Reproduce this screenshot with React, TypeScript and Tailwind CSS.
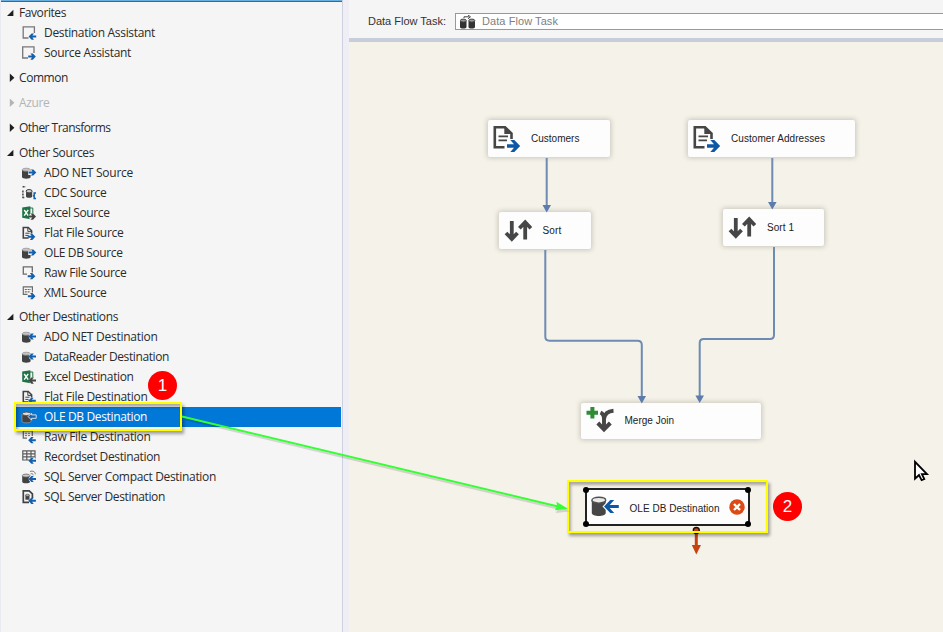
import { useLayoutEffect, useRef, useState, type ReactNode } from "react";

/** Single-line text whose letter spacing is fitted to a given width. */
function FitText({ text, width, className = "" }: { text: string; width: number; className?: string }) {
  const ref = useRef<HTMLSpanElement>(null);
  const [spacing, setSpacing] = useState(0);
  useLayoutEffect(() => {
    const el = ref.current;
    if (!el) return;
    const natural = el.getBoundingClientRect().width - spacing * text.length;
    setSpacing((width - natural) / text.length);
  }, [text, width]);
  return (
    <span ref={ref} className={`whitespace-nowrap ${className}`} style={{ letterSpacing: spacing }}>
      {text}
    </span>
  );
}

type IconKind =
  | "assistDest" | "assistSrc" | "dbSrc" | "dbDest" | "cdc" | "excelSrc" | "excelDest"
  | "fileSrc" | "fileDest" | "rawSrc" | "rawDest" | "xml" | "grid" | "compact" | "server" | "dbSel";

const DARK = "#424242";
const BLUE = "#1560ac";

/** Small arrow centred on (x, y). */
function Arrow({ x, y, left = false, color = BLUE }: { x: number; y: number; left?: boolean; color?: string }) {
  return (
    <path
      transform={`translate(${x} ${y}) scale(${left ? -1 : 1} 1)`}
      d="M-3.6 -1H.2L-1.4 -3.1H1L4 0L1 3.1H-1.4L.2 1H-3.6Z"
      fill={color}
    />
  );
}

function Cylinder() {
  return (
    <>
      <path d="M0 4V11C0 13.2 8.6 13.2 8.6 11V4Z" fill={DARK} />
      <ellipse cx="4.3" cy="3.7" rx="4" ry="1.5" fill="#c4c4c4" stroke="#8a8a8a" strokeWidth=".7" />
    </>
  );
}

function Doc() {
  return (
    <>
      <path d="M6.5 12H1.3V1.5H6.2L9.6 4.8V7.5" fill="none" stroke={DARK} strokeWidth="1.6" />
      <path d="M5.8 1.5V5.4H9.8M3.3 7.2H7.6M3.3 9.4H6.6" fill="none" stroke={DARK} strokeWidth="1" />
    </>
  );
}

function Excel() {
  return (
    <>
      <path d="M.2 1.6L8.4 .2V13.2L.2 11.8Z" fill="#217346" />
      <path d="M8 2H10.8V8" fill="none" stroke="#217346" strokeWidth="1" />
      <path d="M2.2 4L6.2 9.6M6.2 3.8L2.2 9.6" stroke="white" strokeWidth="1.4" />
    </>
  );
}

function SmallIcon({ kind }: { kind: IconKind }) {
  const body: Record<IconKind, ReactNode> = {
    assistDest: <><path d="M6.5 12H1.2V.8H12.4V7" fill="none" stroke="#777" strokeWidth="1.3" /><Arrow x={10.6} y={10.6} left /></>,
    assistSrc: <><path d="M6 12H.7V.8H12V7" fill="none" stroke="#777" strokeWidth="1.3" /><Arrow x={9.8} y={10.6} /></>,
    dbSrc: <><Cylinder /><path d="M6.2 4.5H9V9H6.2Z" fill="#f5f5f5" /><Arrow x={10.3} y={6.5} /></>,
    dbDest: <><Cylinder /><circle cx="9.8" cy="6.5" r="3" fill="#f5f5f5" /><Arrow x={10.4} y={6.5} left /></>,
    dbSel: <><path d="M0 4V11.2C0 13.4 9 13.4 9 11.2V4Z" fill={DARK} stroke="#aaa" strokeWidth=".6" /><ellipse cx="4.5" cy="3.8" rx="4.2" ry="1.8" fill="#ddd" stroke="#555" /><path d="M6.1 6.6L9.6 3.1V4.9H14.2V8.3H9.6V10.1Z" fill="#1764b2" stroke="#ddd" strokeWidth="1" /></>,
    cdc: <><path d="M.6 .8H3.8M.9 4.5V11.5M.3 11.5H3" fill="none" stroke={DARK} strokeWidth="1.5" strokeDasharray="2 1" /><path d="M4 5.8V10.5C4 12.3 10.2 12.3 10.2 10.5V5.8Z" fill={DARK} /><ellipse cx="7.1" cy="5.2" rx="3" ry="1.7" fill="#ccc" stroke={DARK} strokeWidth="1" /><path d="M14 7H12.2V12.5H14M10.9 9.7H12" fill="none" stroke={BLUE} strokeWidth="1.5" /></>,
    excelSrc: <><Excel /><circle cx="10" cy="10.6" r="3.1" fill="#f5f5f5" /><Arrow x={10} y={10.6} color="#444" /></>,
    excelDest: <><Excel /><circle cx="10.4" cy="10.6" r="3.1" fill="#f5f5f5" /><Arrow x={10.4} y={10.6} left color="#444" /></>,
    fileSrc: <><Doc /><Arrow x={9.3} y={10.8} /></>,
    fileDest: <><Doc /><Arrow x={10.2} y={10.8} left /></>,
    rawSrc: <><path d="M5 8.2H1.3V.9H10.3V6.5" fill="none" stroke="#6b6b6b" strokeWidth="1.3" /><Arrow x={9.3} y={10.2} /></>,
    rawDest: <><path d="M5 8.2H1.3V.9H10.3V6" fill="none" stroke="#6b6b6b" strokeWidth="1.3" /><path d="M3 3.3H9M3 5.6H8" stroke="#777" strokeDasharray="2 1" /><Arrow x={10.2} y={10.2} left /></>,
    xml: <><path d="M5.5 8.4H1.3V.9H10.4V6.5" fill="none" stroke="#6b6b6b" strokeWidth="1.2" /><path d="M2.8 3.5H9M2.8 5.8H8.5" stroke="#666" strokeWidth="1.2" strokeDasharray="2 .8" /><Arrow x={9.5} y={10.2} /></>,
    grid: <><path d="M.8 .8H13V10H.8ZM.8 3.8H13M.8 6.9H13M4.8 .8V10M9 .8V10" fill="none" stroke="#5b5b5b" strokeWidth="1.2" /><circle cx="10.7" cy="10.7" r="3.4" fill="#f5f5f5" /><Arrow x={10.4} y={10.7} left /></>,
    compact: <><path d="M.2 6V11.7C.2 13.7 8 13.7 8 11.7V6Z" fill={DARK} /><ellipse cx="4.1" cy="5.6" rx="3.8" ry="1.5" fill="#ccc" stroke="#666" strokeWidth=".8" /><path d="M8 1.5C11 .3 13.5 2.1 13.3 4.3M8.5 3.9C10 3.3 11.2 3.9 11.3 5.3" fill="none" stroke="#777" /><circle cx="9.5" cy="9" r="2.8" fill="#f5f5f5" /><Arrow x={10.4} y={9} left /></>,
    server: <><path d="M7 12.3H1.3V.9H7.2L10.4 3.9V8" fill="none" stroke={DARK} strokeWidth="1.7" /><path d="M3.4 5.2V9.7H7.5V5.2Z" fill={DARK} /><ellipse cx="5.5" cy="5.2" rx="2.1" ry="1" fill="#bbb" stroke={DARK} strokeWidth=".6" /><Arrow x={10.3} y={10.8} left /></>,
  };
  return (
    <svg width="15" height="14" viewBox="0 0 15 14" className="shrink-0 overflow-visible">
      {body[kind]}
    </svg>
  );
}

type Item = [label: string, width: number, icon: IconKind];
type Group = { title: string; width: number; open?: boolean; disabled?: boolean; items?: Item[] };

const groups: Group[] = [
  { title: "Favorites", width: 47, open: true, items: [["Destination Assistant", 111, "assistDest"], ["Source Assistant", 87, "assistSrc"]] },
  { title: "Common", width: 49 },
  { title: "Azure", width: 30.5, disabled: true },
  { title: "Other Transforms", width: 91.5 },
  {
    title: "Other Sources", width: 75, open: true,
    items: [
      ["ADO NET Source", 89, "dbSrc"],
      ["CDC Source", 62.5, "cdc"],
      ["Excel Source", 65.5, "excelSrc"],
      ["Flat File Source", 79.5, "fileSrc"],
      ["OLE DB Source", 78.5, "dbSrc"],
      ["Raw File Source", 82.5, "rawSrc"],
      ["XML Source", 62.5, "xml"],
    ],
  },
  {
    title: "Other Destinations", width: 99, open: true,
    items: [
      ["ADO NET Destination", 113.5, "dbDest"],
      ["DataReader Destination", 125, "dbDest"],
      ["Excel Destination", 89.5, "excelDest"],
      ["Flat File Destination", 103.5, "fileDest"],
      ["OLE DB Destination", 103, "dbSel"],
      ["Raw File Destination", 106.5, "rawDest"],
      ["Recordset Destination", 116, "grid"],
      ["SQL Server Compact Destination", 172, "compact"],
      ["SQL Server Destination", 121, "server"],
    ],
  },
];

function ToolboxGroup({ group }: { group: Group }) {
  return (
    <section>
      <div className={`flex h-5 items-center pl-[7px] ${group.disabled ? "text-[#b4b4b4]" : "text-[#2b2b2b]"}`}>
        <svg width="12" height="10" viewBox="0 0 12 10" className="shrink-0">
          {group.open ? <path d="M0 8L6.4 1.8V8Z" fill="#1e1e1e" /> : <path d="M2.8 .5L7.4 4.7L2.8 8.9Z" fill={group.disabled ? "#b4b4b4" : "#1e1e1e"} />}
        </svg>
        <FitText text={group.title} width={group.width} />
      </div>
      {group.items?.map(([label, width, icon]) => {
        const selected = label === "OLE DB Destination";
        return (
          <div key={label} className={`ml-4 flex h-5 items-center gap-[7px] pl-[6px] ${selected ? "bg-[#0078d7] text-white" : "text-[#2b2b2b]"}`}>
            <SmallIcon kind={icon} />
            <FitText text={label} width={width} />
          </div>
        );
      })}
    </section>
  );
}

function FileGlyph() {
  return (
    <svg width="29" height="28" viewBox="0 0 29 28">
      <path d="M12.5 22.3H2.8V2.3H13L19.5 8.5V14" fill="none" stroke="#464646" strokeWidth="2.6" />
      <path d="M12.3 1V9H20.5Z" fill="#464646" />
      <path d="M6.5 11.3H16M6.5 15.3H15" stroke="#464646" strokeWidth="1.7" />
      <path d="M15 19.2H22L18.3 15H22.3L28.2 21L22.3 27H18.3L22 22.8H15Z" fill="#0d58a6" />
    </svg>
  );
}

function SortGlyph() {
  return (
    <svg width="28" height="24" viewBox="0 0 28 24">
      <g fill="none" stroke="#464646" strokeWidth="3.8">
        <path d="M7.8 2V19.5M2 14L7.8 20L13.5 14" />
        <path d="M21.2 20.5V4M15.4 9.3L21.2 3.2L26.9 9.3" />
      </g>
    </svg>
  );
}

function MergeGlyph() {
  return (
    <svg width="28" height="28" viewBox="0 0 28 28">
      <path d="M6.4 0V11.5M.5 5.8H12" stroke="#2f8b34" strokeWidth="4" />
      <path d="M14.5 5.5Q18 7 18 12V22M18 12Q19 4.4 27.5 3.8" fill="none" stroke="#464646" strokeWidth="3.9" />
      <path d="M11.8 16L18 22.4L24.3 16" fill="none" stroke="#464646" strokeWidth="4" />
    </svg>
  );
}

function DatabaseGlyph() {
  return (
    <svg width="28" height="22" viewBox="0 0 28 22">
      <path d="M.8 4V17C.8 21 14.7 21 14.7 17V4Z" fill="#464646" />
      <ellipse cx="7.8" cy="4.2" rx="6.9" ry="2.9" fill="#e8e8e8" stroke="#505050" strokeWidth="1.4" />
      <path d="M13 10.5L19.3 4H23.2L18.7 8.9H27.8V12.1H18.7L23.2 17H19.3Z" fill="#0d58a6" stroke="white" strokeWidth="2.2" paintOrder="stroke" />
    </svg>
  );
}

function FlowNode({ place, glyph, label, width }: { place: string; glyph: ReactNode; label: string; width: number }) {
  return (
    <div className={`absolute flex items-center rounded-[2px] bg-[#fdfdfe] shadow-[0_0_5px_1px_rgba(110,105,90,0.32)] ${place}`}>
      {glyph}
      <FitText text={label} width={width} className="text-[10px] leading-3 text-[#222]" />
    </div>
  );
}

function Badge({ place, children }: { place: string; children: ReactNode }) {
  return (
    <div className={`absolute flex size-[29px] items-center justify-center rounded-full bg-[#fe0000] font-['Liberation_Sans',sans-serif] text-[17px] leading-none text-white ${place}`}>
      {children}
    </div>
  );
}

const handles = ["-left-[4px] -top-[3px]", "-right-[3px] -top-[3px]", "-left-[4px] -bottom-[3px]", "-right-[3px] -bottom-[3px]"];

export default function App() {
  return (
    <div className="relative flex h-[632px] w-[943px] overflow-hidden bg-[#f5f5f5]">
      <aside className="w-[342px] shrink-0 border-l border-[#e8e9f1] font-['Open_Sans','Noto_Sans',sans-serif] text-[12px] leading-5">
        <div className="h-[2px] border-b border-[#007acc] bg-[#68aede]" />
        <div className="-ml-px mr-px flex flex-col gap-[4.85px] pt-[1.2px]">
          {groups.map((g) => <ToolboxGroup key={g.title} group={g} />)}
        </div>
      </aside>
      <div className="w-[7px] shrink-0 border-l border-[#ccd0df] bg-[#eeeef4]" />

      <main className="flex min-w-0 flex-1 flex-col font-['Liberation_Sans',Arial,sans-serif]">
        <header className="flex h-[38px] shrink-0 items-start pl-[19px] pt-[13px] text-[11px]">
          <div className="w-[87px] leading-4 text-[#333]"><FitText text="Data Flow Task:" width={78} /></div>
          <div className="flex h-[17px] flex-1 items-center border border-r-0 border-[#999] bg-white pl-[4px] text-[#808080]">
            <svg width="22" height="14" viewBox="0 0 22 14" className="shrink-0">
              <path d="M0 6V12C0 14 6.5 14 6.5 12V6ZM8.5 6V12C8.5 14 15 14 15 12V6Z" fill="#333" />
              <ellipse cx="3.3" cy="5.6" rx="3" ry="1.5" fill="#999" stroke="#444" />
              <ellipse cx="11.8" cy="5.6" rx="3" ry="1.5" fill="#999" stroke="#444" />
              <path d="M4 3V1.8H9M8 0L10.5 1.8L8 3.8" fill="none" stroke="#444" />
            </svg>
            <FitText text="Data Flow Task" width={76} />
          </div>
        </header>
        <div className="h-1 shrink-0 bg-[#c8cddb]" />
        <div className="flex-1 bg-[#f5f2e9]" />
      </main>

      {/* Data flow diagram */}
      <div className="pointer-events-none absolute inset-0 font-['Liberation_Sans',Arial,sans-serif]">
        <FlowNode place="left-[488px] top-[120px] h-[37px] w-[122px] gap-[10px] pl-[4px]" glyph={<FileGlyph />} label="Customers" width={48.5} />
        <FlowNode place="left-[688px] top-[120px] h-[37px] w-[167px] gap-[10px] pl-[4px]" glyph={<FileGlyph />} label="Customer Addresses" width={94} />
        <FlowNode place="left-[499px] top-[212px] h-[37px] w-[92px] gap-[10.5px] pl-[5px]" glyph={<SortGlyph />} label="Sort" width={19} />
        <FlowNode place="left-[723px] top-[209px] h-[37px] w-[101px] gap-[11px] pl-[5px]" glyph={<SortGlyph />} label="Sort 1" width={27} />
        <FlowNode place="left-[581px] top-[403px] h-[36px] w-[180px] gap-[10.5px] pl-[5px]" glyph={<MergeGlyph />} label="Merge Join" width={49.5} />

        <svg width="943" height="632" className="absolute inset-0">
          <g fill="none" stroke="#6d8bb3" strokeWidth="2">
            <path d="M546.7 158V207M772.3 158V204" />
            <path d="M545.3 250V336.5Q545.3 340.7 549.5 340.7H637.5Q641.8 340.7 641.8 345V397" />
            <path d="M774 247V335Q774 339 770 339H703.7Q699.7 339 699.7 343V397" />
          </g>
          <path d="M542.5 205H551L546.7 212.5ZM768 202H776.6L772.3 209.5ZM637.5 396H646L641.8 403.5ZM695.4 395.5H704L699.7 403Z" fill="#5b7cad" />
          <circle cx="696.3" cy="530.5" r="3" fill="#c9410d" stroke="#111" strokeWidth="1.3" />
          <path d="M696.3 534V547" stroke="#c9410d" strokeWidth="3" />
          <path d="M691.8 545H701L696.3 554.5Z" fill="#c9410d" />
          <path transform="translate(914 461)" d="M1 .8V17.7L5 14L7.6 19.2L10.3 18L7.9 13.2H13Z" fill="white" stroke="black" strokeWidth="1.8" />
        </svg>

        <div className="absolute left-[585px] top-[488px] flex h-[38px] w-[165px] items-center border-2 border-[#222] bg-[#fdfdfe] pl-[4px]">
          <DatabaseGlyph />
          <div className="w-[99px] pl-[10.5px]"><FitText text="OLE DB Destination" width={90} className="text-[10px] leading-3 text-[#222]" /></div>
          <svg width="16" height="16" viewBox="0 0 16 16" className="ml-[11px] shrink-0">
            <circle cx="8" cy="8" r="7.7" fill="#dc4b13" />
            <path d="M5 5L11 11M11 5L5 11" stroke="white" strokeWidth="2.4" />
          </svg>
          {handles.map((h) => <span key={h} className={`absolute size-[6px] rounded-full bg-black ${h}`} />)}
        </div>
      </div>

      {/* Step annotations */}
      <div className="absolute left-[14px] top-[402px] h-[29px] w-[168px] border-2 border-[#ffff00] shadow-[2px_3px_3px_rgba(0,0,0,0.35),inset_2px_3px_3px_rgba(0,0,0,0.3)]" />
      <div className="absolute left-[567px] top-[480px] h-[53px] w-[201px] border-2 border-[#ffff00] shadow-[2px_3px_3px_rgba(0,0,0,0.35),inset_2px_3px_3px_rgba(0,0,0,0.3)]" />
      <svg width="943" height="632" className="absolute inset-0">
        <g transform="translate(1.5 2.5)" opacity=".13">
          <path d="M183 416.5L556 506" stroke="black" strokeWidth="2" />
          <path d="M568 509L554 510.5L557 506L556 501.5Z" fill="black" />
        </g>
        <path d="M182 416.5L558 506.5" stroke="#33ff33" strokeWidth="1.8" />
        <path d="M568 508.7L554.8 510.2L557.2 506.3L556.4 501.7Z" fill="#33ff33" />
      </svg>
      <Badge place="left-[148px] top-[371px]">1</Badge>
      <Badge place="left-[773px] top-[492px]">2</Badge>
    </div>
  );
}
